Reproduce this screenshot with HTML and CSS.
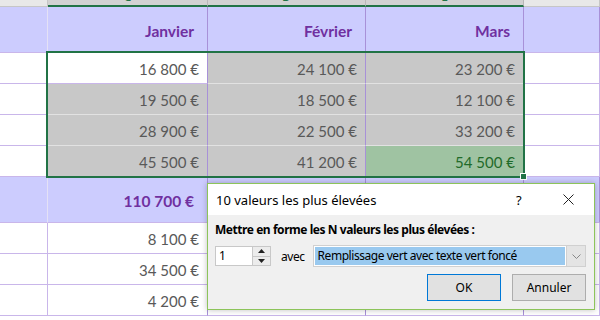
FILE: index.html
```html
<!DOCTYPE html>
<html lang="fr">
<head>
<meta charset="utf-8">
<title>Mise en forme conditionnelle</title>
<link rel="stylesheet" href="styles.css">
</head>
<body>
<div class="sheet">
  <div class="row colhdr">
    <div class="c hb"></div>
    <div class="c hs"><span>C</span></div>
    <div class="c hs"><span>D</span></div>
    <div class="c hs"><span>E</span></div>
    <div class="c hb"></div>
  </div>
  <div class="row tall lav">
    <div class="c lb"></div>
    <div class="c pv head">Janvier</div>
    <div class="c pv head">Février</div>
    <div class="c pv head">Mars</div>
    <div class="c pv"></div>
  </div>
  <div class="row">
    <div class="c w"></div>
    <div class="c w pv num">16 800 €</div>
    <div class="c g pv num">24 100 €</div>
    <div class="c g pv num">23 200 €</div>
    <div class="c w"></div>
  </div>
  <div class="row">
    <div class="c w"></div>
    <div class="c g pv num">19 500 €</div>
    <div class="c g pv num">18 500 €</div>
    <div class="c g pv num">12 100 €</div>
    <div class="c w"></div>
  </div>
  <div class="row">
    <div class="c w"></div>
    <div class="c g pv num">28 900 €</div>
    <div class="c g pv num">22 500 €</div>
    <div class="c g pv num">33 200 €</div>
    <div class="c w"></div>
  </div>
  <div class="row">
    <div class="c w"></div>
    <div class="c g pv num">45 500 €</div>
    <div class="c g pv num">41 200 €</div>
    <div class="c gr pv num">54 500 €</div>
    <div class="c w"></div>
  </div>
  <div class="row tall lav">
    <div class="c lb"></div>
    <div class="c pv head">110 700 €</div>
    <div class="c pv"></div>
    <div class="c pv"></div>
    <div class="c pv"></div>
  </div>
  <div class="row">
    <div class="c w"></div>
    <div class="c w pv num">8 100 €</div>
    <div class="c w pv"></div>
    <div class="c w pv"></div>
    <div class="c w"></div>
  </div>
  <div class="row">
    <div class="c w"></div>
    <div class="c w pv num">34 500 €</div>
    <div class="c w pv"></div>
    <div class="c w pv"></div>
    <div class="c w"></div>
  </div>
  <div class="row">
    <div class="c w"></div>
    <div class="c w pv num">4 200 €</div>
    <div class="c w pv"></div>
    <div class="c w pv"></div>
    <div class="c w"></div>
  </div>
</div>

<div class="selection"></div>
<div class="handle"></div>

<div class="dialog">
  <div class="dlg-title">
    <span class="dlg-name">10 valeurs les plus élevées</span>
    <span class="dlg-help">?</span>
    <svg class="dlg-close" width="11" height="11" viewBox="0 0 11 11"><path d="M0.5 0.5 L10.5 10.5 M10.5 0.5 L0.5 10.5" stroke="#222" stroke-width="1" fill="none"/></svg>
  </div>
  <div class="dlg-body">
    <div class="dlg-label">Mettre en forme les N valeurs les plus élevées :</div>
    <div class="dlg-controls">
      <div class="spin">
        <div class="spin-input">1</div>
        <div class="spin-btns">
          <div class="spin-btn"><svg width="7" height="4" viewBox="0 0 7 4"><path d="M0 4 L3.5 0 L7 4 Z" fill="#222"/></svg></div>
          <div class="spin-btn"><svg width="7" height="4" viewBox="0 0 7 4"><path d="M0 0 L3.5 4 L7 0 Z" fill="#222"/></svg></div>
        </div>
      </div>
      <span class="avec">avec</span>
      <div class="combo">
        <div class="combo-val">Remplissage vert avec texte vert foncé</div>
        <div class="combo-arrow"><svg width="9" height="5" viewBox="0 0 9 5"><path d="M0.5 0.5 L4.5 4.5 L8.5 0.5" stroke="#888" stroke-width="1" fill="none"/></svg></div>
      </div>
    </div>
    <div class="dlg-buttons">
      <div class="btn btn-default">OK</div>
      <div class="btn">Annuler</div>
    </div>
  </div>
</div>
</body>
</html>
```

FILE: styles.css
```css
html, body {
  margin: 0;
  padding: 0;
  width: 600px;
  height: 320px;
  overflow: hidden;
  background: #fff;
}

.sheet {
  font-family: Lato, "Liberation Sans", sans-serif;
}

.row {
  display: grid;
  grid-template-columns: 48px 160px 158px 158px 1fr;
  height: 31px;
}
.row.tall { height: 46px; }
.row.colhdr { height: 7px; }

.c {
  box-sizing: border-box;
  border-right: 1px solid #c9b6ea;
  border-bottom: 1px solid #c9b6ea;
  display: flex;
  justify-content: flex-end;
  align-items: flex-end;
  overflow: hidden;
}

/* column header strip */
.hb {
  background: #e8e8e8;
  border-right: 1px solid #c6c6c6;
  border-bottom: 1px solid #c6c6c6;
}
.hs {
  background: #d2d2d2;
  border-right: 1px solid #b8b8b8;
  border-bottom: 2px solid #217346;
  justify-content: center;
  align-items: flex-start;
}
.hs span {
  font-family: "Noto Sans", sans-serif;
  font-size: 12px;
  line-height: 14px;
  margin-top: -10px;
  color: #217346;
}

/* lavender rows */
.lav .c { background: #ccccfe; }
.lav .lb { border-right: 1px solid #e4e1f5; }

.pv { border-right-color: #a891d8; }
.w { background: #fff; }
.g { background: #c8c8c8; border-bottom-color: #e2e2e2; }
.gr { background: #9fc3a2; border-bottom-color: #e2e2e2; color: #1f6b2a !important; }

.head {
  font-weight: 700;
  color: #7030a0;
  font-size: 15.5px;
  line-height: 18px;
  padding: 0 13px 12px 0;
}

.num {
  color: #595959;
  font-size: 15px;
  line-height: 18px;
  padding: 0 8px 5px 0;
}

/* selection overlay */
.selection {
  position: absolute;
  left: 46px;
  top: 51px;
  width: 475px;
  height: 123px;
  border: 2px solid #217346;
}
.handle {
  position: absolute;
  left: 520px;
  top: 173px;
  width: 5px;
  height: 5px;
  background: #217346;
  border: 1px solid #fff;
}

/* dialog */
.dialog {
  position: absolute;
  left: 207px;
  top: 183px;
  width: 386px;
  height: 125px;
  border: 1px solid #8cc45a;
  background: #f0f0f0;
  box-shadow: 0 0 6px rgba(0, 0, 0, 0.25);
  font-family: "Noto Sans", sans-serif;
  font-size: 12px;
  letter-spacing: -0.45px;
  color: #000;
  display: flex;
  flex-direction: column;
}
.dlg-title {
  height: 31px;
  background: #fff;
  display: flex;
  align-items: center;
  padding-left: 8px;
  font-size: 13px;
  letter-spacing: 0;
}
.dlg-name { flex: 1; }
.dlg-help { width: 14px; margin-right: 33px; }
.dlg-close { margin-right: 20px; }

.dlg-body {
  padding: 6px 8px 0 7px;
  display: flex;
  flex-direction: column;
}
.dlg-label {
  font-weight: 700;
  line-height: 17px;
}
.dlg-controls {
  margin-top: 7px;
  display: flex;
  align-items: center;
  height: 22px;
}
.spin {
  display: flex;
  height: 20px;
  border: 1px solid #c8c8c8;
  box-sizing: border-box;
}
.spin-input {
  width: 36px;
  background: #fff;
  padding-left: 3px;
  line-height: 18px;
  box-sizing: border-box;
}
.spin-btns {
  width: 17px;
  display: flex;
  flex-direction: column;
  border-left: 1px solid #c8c8c8;
}
.spin-btn {
  flex: 1;
  background: #ececec;
  display: flex;
  align-items: center;
  justify-content: center;
}
.spin-btn + .spin-btn { border-top: 1px solid #c8c8c8; }
.avec {
  margin-left: 10px;
  width: 32px;
}
.combo {
  width: 277px;
  height: 22px;
  box-sizing: border-box;
  border: 1px solid #d0d0d0;
  background: #fff;
  display: flex;
}
.combo-val {
  flex: 1;
  margin: 1px;
  background: #99c9ef;
  padding-left: 3px;
  line-height: 18px;
  white-space: nowrap;
  overflow: hidden;
}
.combo-arrow {
  width: 18px;
  background: #e4e4e4;
  border-left: 1px solid #d0d0d0;
  display: flex;
  align-items: center;
  justify-content: center;
}
.dlg-buttons {
  margin-top: 7px;
  display: flex;
  justify-content: flex-end;
  gap: 11px;
}
.btn {
  width: 74px;
  height: 27px;
  box-sizing: border-box;
  border: 1px solid #adadad;
  background: #e1e1e1;
  display: flex;
  align-items: center;
  justify-content: center;
  letter-spacing: 0;
}
.btn-default {
  border: 1px solid #0078d7;
  box-shadow: inset 0 0 0 1px #e1e1e1;
}
```
